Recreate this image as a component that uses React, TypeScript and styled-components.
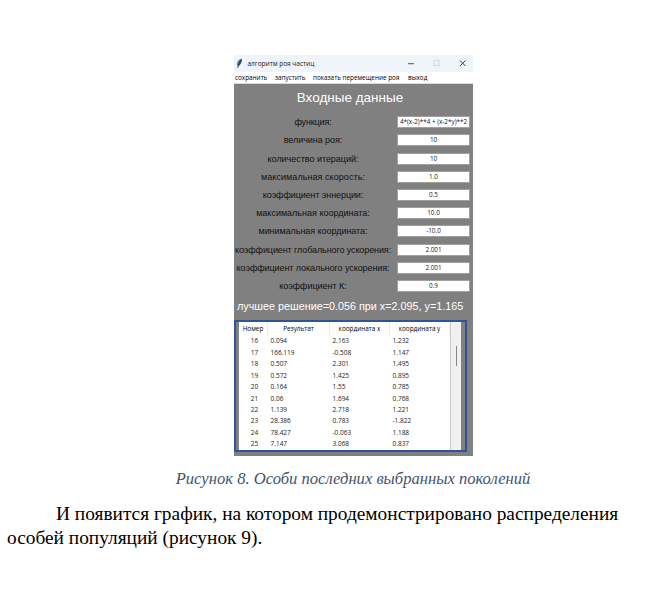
import React from 'react';
import styled, { createGlobalStyle } from 'styled-components';

const Global = createGlobalStyle`
  * { box-sizing: border-box; }
  body { margin: 0; background: #fff; }
`;
const Page = styled.main`
  width: 660px; height: 589px; padding-top: 55px; overflow: hidden;
  background: #fff; color: #111; font-family: "Liberation Serif", serif;
`;
const AppWindow = styled.section`
  width: 239px; height: 401px; margin-left: 234px;
  display: flex; flex-direction: column;
  background: #808080; font-family: "Open Sans", "Noto Sans", sans-serif;
  white-space: nowrap;
`;
const TitleBar = styled.header`
  height: 17px; flex: none; display: flex; align-items: center;
  padding-left: 2px; background: #eff3fa; color: #222; font-size: 6.6px;
`;
const Title = styled.span`
  margin-left: 4.5px; flex: 1; letter-spacing: -0.05px;
`;
const Controls = styled.svg`width: 66px; height: 17px; display: block;`;
const Menu = styled.nav`
  height: 12px; flex: none; display: flex; align-items: center; gap: 8px;
  padding-left: 1px; background: #fff; color: #000; font-size: 6.35px;
  border-bottom: 1px solid #d8d8d8;
`;
const MenuItem = styled.span<{ $w: number }>`
  width: ${p => p.$w}px;
`;
const Heading = styled.h1`
  margin: 0; height: 29px; flex: none; padding-right: 7px; text-align: center; color: #fff;
  font: 400 13.5px/28px "Liberation Sans", sans-serif;
`;
const Form = styled.div`display: grid; grid-auto-rows: 18.22px; flex: none;`;
const Field = styled.label`
  display: grid; grid-template-columns: 158px 73px; column-gap: 5px; align-items: center;
`;
const Label = styled.span<{ $ls: number }>`
  text-align: center; color: #111; font: 9px/18px "Liberation Sans", sans-serif;
  letter-spacing: ${p => p.$ls}px;
`;
const Value = styled.output`
  height: 12px; border: 1px solid #a0a0a0; background: #fff;
  display: flex; align-items: center; justify-content: center; overflow: hidden;
  color: #222; font-size: 6.4px; line-height: 10px; letter-spacing: -0.03px;
`;
const Solution = styled.p`
  margin: 0; height: 25px; padding-left: 3px; flex: none; color: #fff;
  font: 10.8px/22px "Liberation Sans", sans-serif;
`;
const TableFrame = styled.div`
  width: 233px; height: 132px; padding: 0 3px; display: flex; flex: none;
  border: 2px solid #2f5597; background: #808080;
`;
const Table = styled.div`
  width: 212px; background: #fff; color: #222; border-right: 1px solid #ccc;
`;
const Row = styled.div`
  display: grid; grid-template-columns: 29px 62px 60px 60px; height: 11.45px;
  align-items: center; font-size: 6.5px; line-height: 11px;
`;
const HeadRow = styled(Row)`height: 13px; line-height: 13px; font-size: 6.4px; color: #000;`;
const HeadCell = styled.span`text-align: center; border-right: 1px solid #ececec;`;
const Cell = styled.span<{ $center?: boolean }>`
  text-align: ${p => (p.$center ? 'center' : 'left')};
  padding-left: ${p => (p.$center ? 2 : 2.5)}px;
`;
const Scroll = styled.div`
  width: 10px; background: #f0f0f0; display: flex; justify-content: center; padding-top: 24px;
`;
const Thumb = styled.div`width: 1px; height: 20px; background: #858585;`;
const Caption = styled.p`
  margin: 11px 0 0; width: 706px; text-align: center; color: #44546a;
  font-style: italic; font-size: 16.58px; line-height: 24px; white-space: nowrap;
`;
const Paragraph = styled.p`
  margin: 10.5px 0 0 7px; width: 630px; text-indent: 49px;
  font-size: 19.36px; line-height: 24px; color: #000;
`;

const fields: [string, string, number][] = [
  ['функция:', '4*(x-2)**4 + (x-2*y)**2', -0.15],
  ['величина роя:', '10', -0.05],
  ['количество итераций:', '10', -0.03],
  ['максимальная скорость:', '1.0', 0.06],
  ['коэффициент эннерции:', '0.5', -0.1],
  ['максимальная координата:', '10.0', 0],
  ['минимальная координата:', '-10.0', -0.05],
  ['коэффициент глобального ускорения:', '2.001', -0.1],
  ['коэффициент локального ускорения:', '2.001', -0.08],
  ['коэффициент К:', '0.9', -0.03],
];
const rows = [
  ['16', '0.094', '2.163', '1.232'],
  ['17', '166.119', '-0.508', '1.147'],
  ['18', '0.507', '2.301', '1.495'],
  ['19', '0.572', '1.425', '0.895'],
  ['20', '0.164', '1.55', '0.785'],
  ['21', '0.06', '1.694', '0.768'],
  ['22', '1.139', '2.718', '1.221'],
  ['23', '28.386', '0.783', '-1.822'],
  ['24', '78.427', '-0.063', '1.188'],
  ['25', '7.147', '3.068', '0.837'],
];

export default function App() {
  return (
    <Page>
      <Global />
      <AppWindow>
        <TitleBar>
          <svg width="7" height="11" viewBox="0 0 7 11">
            <path d="M1.2 7.8C.8 4.5 2.2 1.4 5.6.7 6.6 3 4.9 6.6 2.2 8Z" fill="#315f83" />
            <path d="M4.9 1.7 1.5 10" stroke="#14273b" strokeWidth=".8" fill="none" />
            <path d="M2.3 5.8C2.4 4 3.2 2.4 4.7 1.5" stroke="#83b4d3" strokeWidth=".5" fill="none" />
          </svg>
          <Title>алгоритм роя частиц</Title>
          <Controls viewBox="0 0 66 17">
            <path d="M1 8.7h6" stroke="#444" strokeWidth=".9" />
            <rect x="27" y="5.5" width="5" height="5" fill="none" stroke="#d0d3d8" strokeWidth=".9" />
            <path d="m53 5.5 5.5 5.5m0-5.5-5.5 5.5" stroke="#333" strokeWidth=".9" />
          </Controls>
        </TitleBar>
        <Menu>
          <MenuItem $w={32}>сохранить</MenuItem>
          <MenuItem $w={30}>запустить</MenuItem>
          <MenuItem $w={87}>показать перемещение роя</MenuItem>
          <MenuItem $w={20}>выход</MenuItem>
        </Menu>
        <Heading>Входные данные</Heading>
        <Form>
          {fields.map(([name, value, spacing]) => (
            <Field key={name}><Label $ls={spacing}>{name}</Label><Value>{value}</Value></Field>
          ))}
        </Form>
        <Solution>лучшее решение=0.056 при x=2.095, y=1.165</Solution>
        <TableFrame>
          <Table>
            <HeadRow>
              {['Номер', 'Результат', 'координата x', 'координата y'].map(h => <HeadCell key={h}>{h}</HeadCell>)}
            </HeadRow>
            {rows.map(row => (
              <Row key={row[0]}>
                {row.map((v, i) => <Cell key={i} $center={i === 0}>{v}</Cell>)}
              </Row>
            ))}
          </Table>
          <Scroll><Thumb /></Scroll>
        </TableFrame>
      </AppWindow>
      <Caption>Рисунок 8. Особи последних выбранных поколений</Caption>
      <Paragraph>И появится график, на котором продемонстрировано распределения особей популяций (рисунок 9).</Paragraph>
    </Page>
  );
}
